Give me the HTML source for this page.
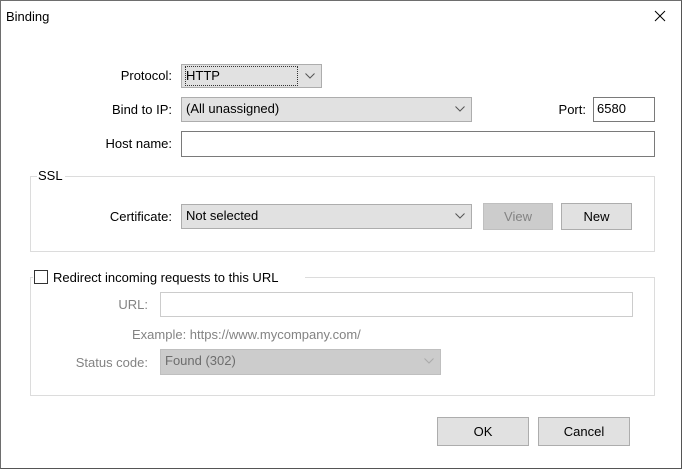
<!DOCTYPE html>
<html><head><style>
*{box-sizing:border-box;margin:0;padding:0}
body{width:683px;height:470px;background:#fff;position:relative;overflow:hidden;font-family:"Liberation Sans",sans-serif;font-size:13px;color:#000}
.a{position:absolute}
.lbl{position:absolute;text-align:right;line-height:15px}
.cb{position:absolute;background:#e1e1e1;border:1px solid #adadad;padding-left:4px;line-height:22px}
.cb svg{position:absolute;right:6px;top:8px}
.in{position:absolute;background:#fff;border:1px solid #7a7a7a;padding-left:3px;line-height:22px}
.btn{position:absolute;background:#e1e1e1;border:1px solid #adadad;text-align:center;line-height:25px}
.grp{position:absolute;border:1px solid #dcdcdc}
.dis{color:#838383}
</style></head><body>
<div class="a" style="left:0;top:0;width:682px;height:469px;border:1px solid #6e6e6e;border-right-color:#555;border-bottom-color:#555"></div>
<div class="a" style="left:6px;top:9px;font-size:13px">Binding</div>
<svg class="a" style="left:654px;top:10px" width="12" height="12"><path d="M1 1L11 11M11 1L1 11" stroke="#000" stroke-width="1"/></svg>

<div class="lbl" style="left:60px;width:112px;top:68px">Protocol:</div>
<div class="cb" style="left:181px;top:64px;width:141px;height:24px"><span style="outline:1px dotted #333;display:inline-block;width:111px;line-height:18px;margin-top:1px">HTTP</span><svg width="10" height="6"><path d="M0.5 0.5L5 5L9.5 0.5" fill="none" stroke="#555"/></svg></div>

<div class="lbl" style="left:60px;width:112px;top:102px">Bind to IP:</div>
<div class="cb" style="left:181px;top:97px;width:291px;height:25px">(All unassigned)<svg width="10" height="6"><path d="M0.5 0.5L5 5L9.5 0.5" fill="none" stroke="#555"/></svg></div>
<div class="lbl" style="left:530px;width:56px;top:102px">Port:</div>
<div class="in" style="left:593px;top:97px;width:62px;height:25px">6580</div>

<div class="lbl" style="left:60px;width:112px;top:136px">Host name:</div>
<div class="in" style="left:181px;top:131px;width:474px;height:26px"></div>

<div class="grp" style="left:30px;top:176px;width:625px;height:76px"></div>
<div class="a" style="left:37px;top:168px;background:#fff;padding:0 2px 0 1px">SSL</div>
<div class="lbl" style="left:60px;width:112px;top:209px">Certificate:</div>
<div class="cb" style="left:181px;top:204px;width:291px;height:25px">Not selected<svg width="10" height="6"><path d="M0.5 0.5L5 5L9.5 0.5" fill="none" stroke="#555"/></svg></div>
<div class="btn dis" style="left:483px;top:203px;width:70px;height:27px;background:#cccccc;border-color:#bfbfbf">View</div>
<div class="btn" style="left:561px;top:203px;width:71px;height:27px">New</div>

<div class="grp" style="left:30px;top:277px;width:625px;height:119px"></div>
<div class="a" style="left:33px;top:269px;width:272px;height:16px;background:#fff"></div>
<div class="a" style="left:34px;top:270px;width:14px;height:14px;border:1px solid #333;background:#fff"></div>
<div class="a" style="left:53px;top:270px">Redirect incoming requests to this URL</div>

<div class="lbl dis" style="left:60px;width:88px;top:297px">URL:</div>
<div class="in" style="left:160px;top:292px;width:473px;height:25px;border-color:#ccc"></div>
<div class="a dis" style="left:132px;top:327px">Example: https://www.mycompany.com/</div>
<div class="lbl dis" style="left:30px;width:118px;top:355px">Status code:</div>
<div class="cb dis" style="left:160px;top:349px;width:281px;height:26px;background:#cccccc;border-color:#bfbfbf;color:#6d6d6d">Found (302)<svg width="10" height="6"><path d="M0.5 0.5L5 5L9.5 0.5" fill="none" stroke="#aaa"/></svg></div>

<div class="btn" style="left:437px;top:417px;width:92px;height:29px;line-height:27px">OK</div>
<div class="btn" style="left:538px;top:417px;width:92px;height:29px;line-height:27px">Cancel</div>
</body></html>
